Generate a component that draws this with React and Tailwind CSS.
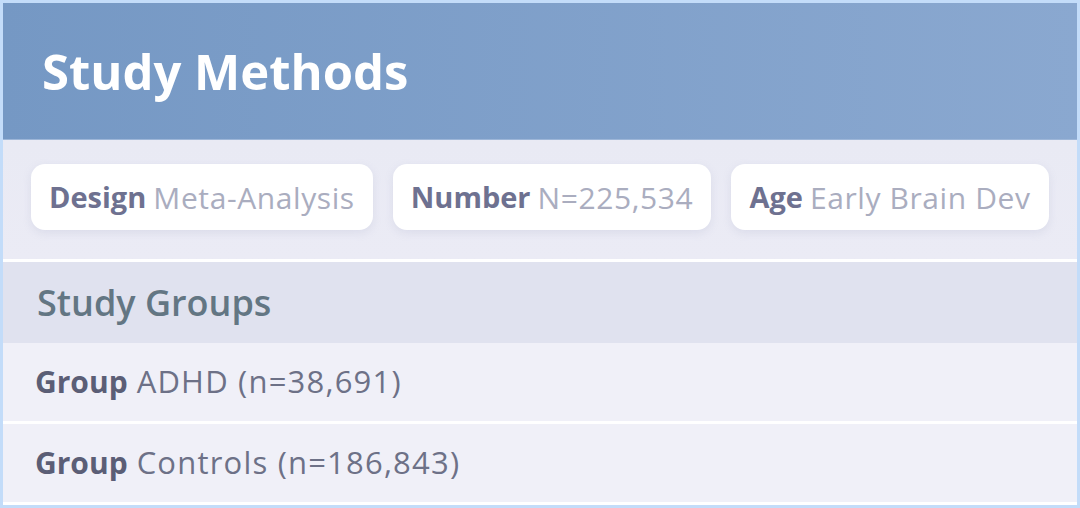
export default function App() {
  const pills = [
    ["Design", "Meta-Analysis"],
    ["Number", "N=225,534"],
    ["Age", "Early Brain Dev"],
  ];
  const groups = ["ADHD (n=38,691)", "Controls (n=186,843)"];
  return (
    <div
      className="w-[1080px] h-[508px] border-[3px] border-[#c3dcf9] bg-[#f0f0f8] flex flex-col overflow-hidden font-['Open_Sans',sans-serif]"
    >
      <div className="h-[137px] shrink-0 flex items-center pl-[39px] bg-gradient-to-r from-[#7598c4] to-[#8aa8d0] border-b border-[#9db6d8]">
        <h1 className="text-[49px] font-bold text-white leading-none">Study Methods</h1>
      </div>
      <div className="h-[122px] shrink-0 bg-gradient-to-b from-[#e9eaf4] to-[#ebebf5] flex items-start gap-[20px] pl-[28px] pt-[24px] border-b-[3px] border-white">
        {pills.map(([k, v]) => (
          <div
            key={k}
            className="h-[66px] bg-white rounded-[14px] px-[18px] flex items-center gap-[7px] shadow-[0_3px_8px_rgba(150,155,190,0.18)]"
          >
            <span className="font-bold text-[29px] text-[#6e7190]">{k}</span>
            <span className="text-[30px] tracking-[0.6px] text-[#aaadbf]">{v}</span>
          </div>
        ))}
      </div>
      <div className="h-[81px] shrink-0 bg-[#e0e2ef] flex items-center pl-[34px]">
        <h2 className="text-[36px] font-semibold text-[#637683]">Study Groups</h2>
      </div>
      {groups.map((g) => (
        <div
          key={g}
          className="h-[81px] shrink-0 bg-[#f0f0f8] border-b-[3px] border-white flex items-center pl-[32px] gap-[9px] pb-[2px]"
        >
          <span className="font-bold text-[30px] text-[#5b5e76]">Group</span>
          <span className="text-[31px] tracking-[1.2px] text-[#6d7187]">{g}</span>
        </div>
      ))}
    </div>
  );
}
